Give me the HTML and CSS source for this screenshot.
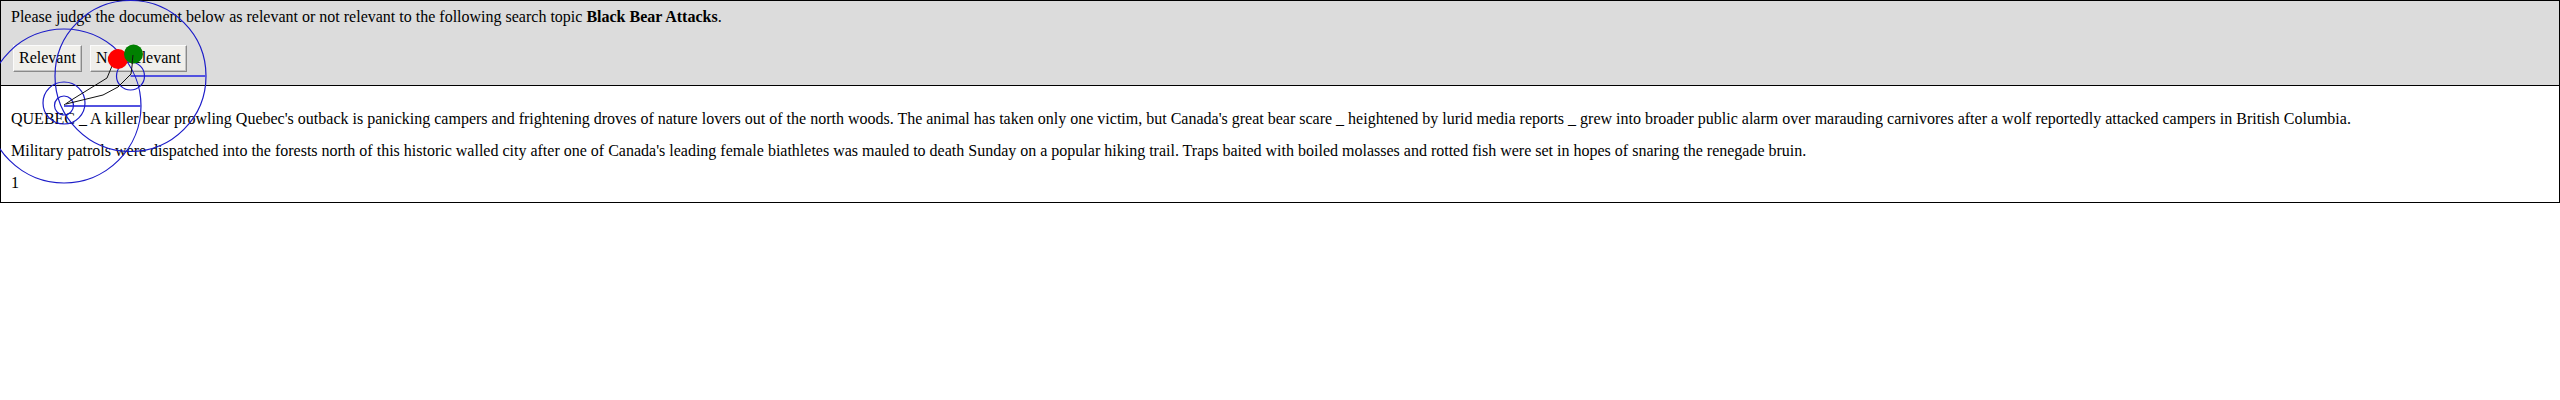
FILE: index.html
```html
<!DOCTYPE html>
<html>
<head>
<meta charset="utf-8">
<link rel="stylesheet" href="styles.css">
</head>
<body>
<div class="judge">
  <div class="topic">
    <p class="prompt">Please judge the document below as relevant or not relevant to the following search topic <b>Black Bear Attacks</b>.</p>
    <div class="actions">
      <button class="btn">Relevant</button>
      <button class="btn">Not Relevant</button>
    </div>
  </div>
  <div class="doc">
    <p>QUEBEC _ A killer bear prowling Quebec's outback is panicking campers and frightening droves of nature lovers out of the north woods. The animal has taken only one victim, but Canada's great bear scare _ heightened by lurid media reports _ grew into broader public alarm over marauding carnivores after a wolf reportedly attacked campers in British Columbia.</p>
    <p>Military patrols were dispatched into the forests north of this historic walled city after one of Canada's leading female biathletes was mauled to death Sunday on a popular hiking trail. Traps baited with boiled molasses and rotted fish were set in hopes of snaring the renegade bruin.</p>
    <p class="page">1</p>
  </div>
  <svg class="trace" width="230" height="200" viewBox="0 0 230 200">
    <circle cx="130.5" cy="76" r="75.5" fill="none" stroke="#1c1cc8" stroke-width="1.2"/>
    <line x1="130.5" y1="76" x2="206" y2="76" stroke="#5252e0" stroke-width="2.2"/>
    <circle cx="130.5" cy="76" r="14" fill="none" stroke="#1c1cc8" stroke-width="1.2"/>
    <circle cx="64" cy="106" r="77" fill="none" stroke="#1c1cc8" stroke-width="1.2"/>
    <line x1="64" y1="106" x2="141" y2="106" stroke="#5252e0" stroke-width="2.2"/>
    <circle cx="64" cy="103" r="21" fill="none" stroke="#1c1cc8" stroke-width="1.2"/>
    <circle cx="64" cy="105.5" r="9.5" fill="none" stroke="#1c1cc8" stroke-width="1.2"/>
    <polyline points="133,58 131,74 118,87 103,95 66,104" fill="none" stroke="#111" stroke-width="1"/>
    <polyline points="112,66 107,78 73,99 64,105" fill="none" stroke="#111" stroke-width="1"/>
    <circle cx="118" cy="59" r="10" fill="#ff0000"/>
    <circle cx="133.5" cy="54" r="9.5" fill="#008000"/>
    <line x1="133" y1="55" x2="132" y2="64" stroke="#111" stroke-width="1"/>
  </svg>
</div>
</body>
</html>
```

FILE: styles.css
```css
html, body {
  margin: 0;
  padding: 0;
  background: #fff;
}

body {
  font-family: "Liberation Serif", "Times New Roman", serif;
  font-size: 16px;
  line-height: 18px;
  color: #000;
}

.judge {
  position: relative;
  border: 1px solid #000;
  height: 201px;
  box-sizing: content-box;
}

.topic {
  background: #dcdcdc;
  border-bottom: 1px solid #000;
  padding: 7px 10px 0 10px;
  height: 77px;
}

.prompt {
  margin: 0 0 19px 0;
}

.actions {
  display: flex;
  gap: 8px;
  padding-left: 2px;
}

.btn {
  font-family: "Liberation Serif", "Times New Roman", serif;
  font-size: 16px;
  line-height: 18px;
  height: 27px;
  box-sizing: border-box;
  padding: 0 5px 2px 5px;
  margin: 0;
  background: #f0efeb;
  color: #000;
  border: 1px solid;
  border-color: #fbfbfb #8a8a8a #8a8a8a #fbfbfb;
  box-shadow: inset -1px -1px 0 #c4c4c4;
  border-radius: 0;
}

.doc {
  padding: 10px 10px 0 10px;
}

.doc p {
  margin: 14px 0;
}

.doc .page {
  margin-bottom: 0;
}

.trace {
  position: absolute;
  left: -1px;
  top: -1px;
  pointer-events: none;
  overflow: visible;
}
```
